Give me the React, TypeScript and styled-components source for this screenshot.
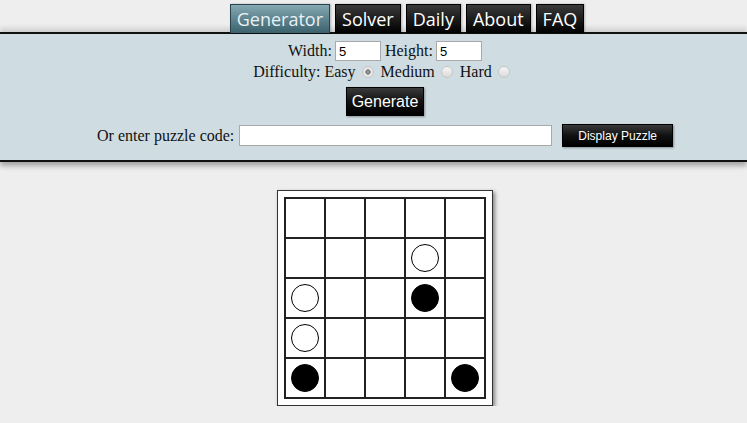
import React from "react";
import styled, { createGlobalStyle } from "styled-components";

const GlobalStyle = createGlobalStyle`
  html, body { margin: 0; padding: 0; background: #eeeeee; }
  body { font-family: "Liberation Serif", "Times New Roman", serif; font-size: 16px; color: #111; }
`;

const Nav = styled.nav`
  display: flex;
  justify-content: center;
  gap: 5px;
  padding: 4px 0 0 67px;
  height: 28px;
`;

const Tab = styled.a<{ $active?: boolean }>`
  display: block;
  height: 28px;
  line-height: 28px;
  padding: 0 6px;
  font-family: "Open Sans", "DejaVu Sans", sans-serif;
  font-size: 18px;
  color: ${(p) => (p.$active ? "#e8f1f3" : "#ffffff")};
  border: 1px solid ${(p) => (p.$active ? "#27444c" : "#000")};
  border-bottom: none;
  background: ${(p) =>
    p.$active
      ? "linear-gradient(#86a9b3, #5d848f 50%, #3b616c)"
      : "linear-gradient(#3a3a3a, #161616 60%, #000)"};
  box-shadow: 1px 0 2px rgba(0, 0, 0, 0.25);
`;

const Panel = styled.section`
  background: #cfdde2;
  border-top: 2px solid #111;
  border-bottom: 2px solid #111;
  box-shadow: 0 -4px 5px rgba(0, 0, 0, 0.12), 0 4px 5px rgba(0, 0, 0, 0.3);
  padding: 7px 0 13px 23px;
  display: flex;
  flex-direction: column;
  align-items: center;
`;

const Row = styled.div<{ $mt?: number }>`
  display: flex;
  align-items: center;
  justify-content: center;
  margin-top: ${(p) => p.$mt ?? 0}px;
  line-height: 20px;
`;

const Label = styled.span<{ $ml?: number }>`
  margin-left: ${(p) => p.$ml ?? 0}px;
`;

const NumInput = styled.input`
  width: 46px;
  height: 20px;
  box-sizing: border-box;
  margin-left: 3px;
  padding: 1px 3px;
  border: 1px solid #a9a9a9;
  background: #fff;
  font-family: "Liberation Sans", Arial, sans-serif;
  font-size: 13px;
`;

const CodeInput = styled.input`
  width: 313px;
  height: 21px;
  box-sizing: border-box;
  margin-left: 5px;
  border: 1px solid #a9a9a9;
  background: #fff;
`;

const Radio = styled.input`
  appearance: none;
  width: 12px;
  height: 12px;
  margin: 0 7px 0 6px;
  border-radius: 50%;
  border: 1px solid #c6c6c6;
  background: linear-gradient(#f6f6f6, #dadada);
  &:checked {
    background: radial-gradient(circle, #8a8a8a 0 2.5px, #eeeeee 3px, #dcdcdc);
  }
`;

const BlackButton = styled.button<{ $small?: boolean }>`
  font-family: "Liberation Sans", Arial, sans-serif;
  font-size: ${(p) => (p.$small ? "12px" : "16px")};
  color: #fff;
  height: ${(p) => (p.$small ? "23px" : "29px")};
  padding: ${(p) => (p.$small ? "0 15px" : "0 5px")};
  margin-left: ${(p) => (p.$small ? "10px" : "0")};
  border: 1px solid #000;
  background: linear-gradient(#3a3a3a, #111 50%, #000);
  box-shadow: 1px 1px 2px rgba(0, 0, 0, 0.35);
  cursor: pointer;
`;

const BoardWrap = styled.div`
  display: flex;
  justify-content: center;
  padding: 28px 0 0 23px;
`;

const BoardBox = styled.div`
  background: #fff;
  border: 1px solid #333;
  padding: 6px;
  box-shadow: 2px 2px 4px rgba(0, 0, 0, 0.45);
`;

const Grid = styled.div`
  display: grid;
  grid-template-columns: repeat(5, 38px);
  grid-auto-rows: 38px;
  gap: 2px;
  padding: 2px;
  background: #222;
`;

const Cell = styled.div`
  background: #fff;
  display: flex;
  align-items: center;
  justify-content: center;
`;

const Stone = styled.div<{ $black?: boolean }>`
  width: 26px;
  height: 26px;
  border-radius: 50%;
  border: 1px solid #000;
  background: ${(p) => (p.$black ? "#000" : "#fff")};
`;

const board = [
  ".....",
  "...w.",
  "w..b.",
  "w....",
  "b...b",
];

export default function App() {
  return (
    <>
      <GlobalStyle />
      <Nav>
        <Tab $active>Generator</Tab>
        <Tab>Solver</Tab>
        <Tab>Daily</Tab>
        <Tab>About</Tab>
        <Tab>FAQ</Tab>
      </Nav>
      <Panel>
        <Row>
          <Label>Width:</Label>
          <NumInput defaultValue="5" />
          <Label $ml={4}>Height:</Label>
          <NumInput defaultValue="5" />
        </Row>
        <Row $mt={1}>
          <Label>Difficulty: Easy</Label>
          <Radio type="radio" name="d" defaultChecked />
          <Label>Medium</Label>
          <Radio type="radio" name="d" />
          <Label>Hard</Label>
          <Radio type="radio" name="d" />
        </Row>
        <Row $mt={5}>
          <BlackButton>Generate</BlackButton>
        </Row>
        <Row $mt={8}>
          <Label>Or enter puzzle code:</Label>
          <CodeInput />
          <BlackButton $small>Display Puzzle</BlackButton>
        </Row>
      </Panel>
      <BoardWrap>
        <BoardBox>
          <Grid>
            {board.flatMap((row, r) =>
              row.split("").map((c, i) => (
                <Cell key={`${r}-${i}`}>
                  {c !== "." && <Stone $black={c === "b"} />}
                </Cell>
              ))
            )}
          </Grid>
        </BoardBox>
      </BoardWrap>
    </>
  );
}
